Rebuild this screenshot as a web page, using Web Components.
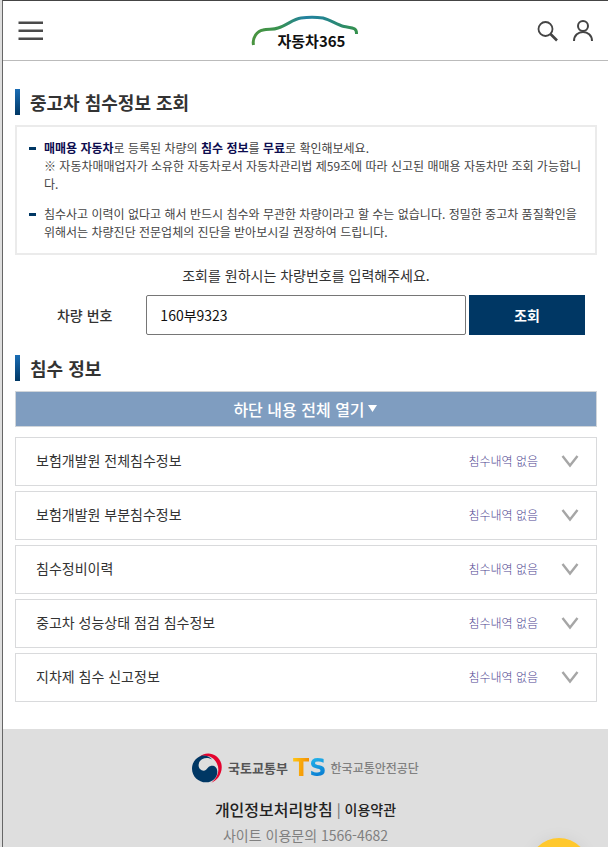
<!DOCTYPE html>
<html lang="ko">
<head>
<meta charset="utf-8">
<meta name="viewport" content="width=device-width, initial-scale=1">
<title>자동차365</title>
<style>
    html {
        background: #dedede;
    }
    body {
        margin: 0;
        font-family: "Noto Sans CJK KR", "Noto Sans", sans-serif;
        font-size: 14px;
        line-height: 20px;
        color: #333;
    }
</style>
</head>
<body>
<car-page>
    <site-header slot="header"></site-header>

    <section-title>중고차 침수정보 조회</section-title>
    <notice-box>
        <notice-item><b>매매용 자동차</b>로 등록된 차량의 <b>침수 정보</b>를 <b>무료</b>로 확인해보세요.<br>※ 자동차매매업자가 소유한 자동차로서 자동차관리법 제59조에 따라 신고된 매매용 자동차만 조회 가능합니다.</notice-item>
        <notice-item>침수사고 이력이 없다고 해서 반드시 침수와 무관한 차량이라고 할 수는 없습니다. 정밀한 중고차 품질확인을 위해서는 차량진단 전문업체의 진단을 받아보시길 권장하여 드립니다.</notice-item>
    </notice-box>
    <search-form value="160부9323">조회를 원하시는 차량번호를 입력해주세요.</search-form>

    <section-title>침수 정보</section-title>
    <flood-list>
        <flood-row status="침수내역 없음">보험개발원 전체침수정보</flood-row>
        <flood-row status="침수내역 없음">보험개발원 부분침수정보</flood-row>
        <flood-row status="침수내역 없음">침수정비이력</flood-row>
        <flood-row status="침수내역 없음">중고차 성능상태 점검 침수정보</flood-row>
        <flood-row status="침수내역 없음">지차제 침수 신고정보</flood-row>
    </flood-list>

    <site-footer slot="footer"></site-footer>
</car-page>
<chat-button></chat-button>

<script>
function define(name, html, setup) {
    const template = document.createElement('template');
    template.innerHTML = html;

    customElements.define(name, class extends HTMLElement {
        constructor() {
            super();
            this.attachShadow({ mode: 'open' });
            this.shadowRoot.appendChild(template.content.cloneNode(true));
        }
        connectedCallback() {
            if (setup) setup(this, this.shadowRoot);
        }
    });
}

define('car-page', `
    <style>
        :host {
            display: flex;
            flex-direction: column;
            min-height: 100vh;
            box-sizing: border-box;
            margin-left: 2px;
            border-left: 1px solid #666;
            border-top: 1px solid #444;
            background: #fff;
        }
        main {
            padding: 28px 11px 27px 12px;
        }
        slot[name="footer"] {
            display: flex;
            flex: 1;
            flex-direction: column;
        }
    </style>
    <slot name="header"></slot>
    <main><slot></slot></main>
    <slot name="footer"></slot>
`);

define('site-header', `
    <style>
        :host {
            display: block;
            border-bottom: 1px solid #bbb;
        }
        header {
            display: grid;
            grid-template-columns: 1fr auto 1fr;
            align-items: center;
            height: 59px;
            padding: 0 14px;
        }
        button {
            display: block;
            padding: 0;
            border: 0;
            background: none;
            cursor: pointer;
        }
        svg {
            display: block;
        }
        .tools {
            display: flex;
            justify-content: flex-end;
            gap: 12px;
        }
        .logo {
            display: grid;
            color: #111;
            text-decoration: none;
        }
        .logo svg, .logo span {
            grid-area: 1 / 1;
        }
        .logo span {
            padding: 20px 0 0 12px;
            text-align: center;
            font-size: 15px;
            line-height: 20px;
            font-weight: 700;
        }
    </style>
    <header>
        <button aria-label="메뉴">
            <svg width="28" height="24" viewBox="0 0 28 24" stroke="#4a4a4a" stroke-width="2.500">
                <path d="M1.500 3.800H26M1.500 11.800H26M1.500 19.800H26"/>
            </svg>
        </button>
        <a class="logo" href="#" aria-label="자동차365">
            <svg width="110" height="36" viewBox="0 0 110 36" fill="none">
                <defs>
                    <linearGradient id="car" x1="0" x2="1" y1="0" y2="0">
                        <stop offset="0" stop-color="#4a9440"/>
                        <stop offset=".25" stop-color="#389250"/>
                        <stop offset=".5" stop-color="#2382a0"/>
                        <stop offset=".68" stop-color="#23848e"/>
                        <stop offset="1" stop-color="#35914e"/>
                    </linearGradient>
                </defs>
                <path d="M2.500 34C1 27 6 20 12 19C17 17.500 22 19 27 17C36 14.500 42 8 50 7C57 6 65 6 72 7C80 9 86 14 93 15.500C100 17 106 16 105.500 23" stroke="url(#car)" stroke-width="3"/>
            </svg>
            <span>자동차365</span>
        </a>
        <div class="tools">
            <button aria-label="검색">
                <svg width="24" height="26" viewBox="0 0 24 26" fill="none" stroke="#444">
                    <circle cx="9.500" cy="11" r="7" stroke-width="1.800"/>
                    <path d="M14.500 16L21 22.500" stroke-width="2.600"/>
                </svg>
            </button>
            <button aria-label="로그인">
                <svg width="22" height="26" viewBox="0 0 22 26" fill="none" stroke="#444" stroke-width="2">
                    <circle cx="11" cy="8" r="5"/>
                    <path d="M2 23C2 11 20 11 20 23"/>
                </svg>
            </button>
        </div>
    </header>
`);

define('section-title', `
    <style>
        :host {
            display: block;
            margin-bottom: 10px;
        }
        h2 {
            display: flex;
            align-items: center;
            gap: 10px;
            margin: 0;
            font-size: 18px;
            line-height: 26px;
            font-weight: 700;
        }
        h2::before {
            content: "";
            width: 5px;
            height: 26px;
            background: linear-gradient(#1a6db5, #003764);
        }
    </style>
    <h2><slot></slot></h2>
`);

define('notice-box', `
    <style>
        :host {
            display: flex;
            flex-direction: column;
            gap: 12px;
            padding: 12px;
            border: 2px solid #ebebeb;
        }
    </style>
    <slot></slot>
`);

define('notice-item', `
    <style>
        :host {
            display: flex;
            gap: 8px;
            font-size: 12px;
            line-height: 18px;
            color: #444;
        }
        :host::before {
            content: "";
            flex: none;
            width: 7px;
            height: 3px;
            margin-top: 8px;
            background: #003764;
        }
        ::slotted(b) {
            color: #0d0d4f;
        }
    </style>
    <div><slot></slot></div>
`);

define('search-form', `
    <style>
        :host {
            display: block;
            padding: 10px 12px 20px 8px;
        }
        p {
            margin: 0 0 10px 4px;
            text-align: center;
        }
        form {
            display: grid;
            grid-template-columns: 22fr 57fr 119px;
            align-items: center;
        }
        label {
            text-align: center;
            font-weight: 500;
        }
        input, button {
            height: 40px;
            box-sizing: border-box;
            font: inherit;
        }
        input {
            width: 100%;
            min-width: 0;
            padding: 0 13px;
            border: 1px solid #767676;
            border-radius: 2px;
            color: #111;
        }
        button {
            margin-left: 3px;
            padding: 0;
            border: 0;
            background: #003764;
            color: #fff;
            font-weight: 700;
            cursor: pointer;
        }
    </style>
    <p><slot></slot></p>
    <form>
        <label for="number">차량 번호</label>
        <input id="number" type="text">
        <button type="button">조회</button>
    </form>
`, (host, root) => {
    root.querySelector('input').value = host.getAttribute('value') || '';
});

define('flood-list', `
    <style>
        :host {
            display: block;
        }
        button {
            display: flex;
            align-items: center;
            justify-content: center;
            gap: 3px;
            width: 100%;
            height: 36px;
            margin-bottom: 10px;
            padding: 0 2px 0 0;
            border: 1px solid #d0d5da;
            background: #7f9dc0;
            color: #fff;
            font: inherit;
            font-size: 16px;
            font-weight: 500;
            cursor: pointer;
        }
        .rows {
            display: flex;
            flex-direction: column;
            gap: 5px;
        }
    </style>
    <button type="button">하단 내용 전체 열기
        <svg width="9" height="8" viewBox="0 0 9 8" fill="#fff"><path d="M0 0H9L4.500 7Z"/></svg>
    </button>
    <div class="rows"><slot></slot></div>
`);

define('flood-row', `
    <style>
        :host {
            display: block;
        }
        button {
            display: flex;
            align-items: center;
            width: 100%;
            height: 49px;
            padding: 0 17px 2px 20px;
            border: 1px solid #d9dadc;
            background: #fff;
            color: #333;
            font: inherit;
            text-align: left;
            cursor: pointer;
        }
        .name {
            flex: 1;
            padding-bottom: 2px;
        }
        .status {
            margin-right: 23px;
            font-size: 12px;
            font-weight: 300;
            color: #4f4691;
        }
    </style>
    <button type="button" aria-expanded="false">
        <span class="name"><slot></slot></span>
        <span class="status"></span>
        <svg width="18" height="14" viewBox="0 0 18 14" fill="none" stroke="#a6a6a6" stroke-width="2.400"><path d="M1.500 2L9 11.500L16.500 2"/></svg>
    </button>
`, (host, root) => {
    root.querySelector('.status').textContent = host.getAttribute('status');
});

define('site-footer', `
    <style>
        :host {
            display: block;
            flex: 1;
            padding: 23px 0 0;
            background: #dedede;
            text-align: center;
        }
        .logos, .org, .links {
            display: flex;
            align-items: center;
            justify-content: center;
        }
        .logos {
            gap: 5px;
            height: 32px;
            margin-bottom: 13px;
        }
        .org {
            gap: 6px;
            font-size: 13px;
            font-weight: 700;
            color: #555;
        }
        .ts {
            gap: 4px;
            font-size: 12px;
            font-weight: 500;
            color: #808080;
        }
        .mark {
            font-family: "DejaVu Sans", sans-serif;
            font-size: 24px;
            font-weight: 700;
        }
        .t, .s {
            background: linear-gradient(100deg, #ffc814, #f08200);
            -webkit-background-clip: text;
            background-clip: text;
            color: transparent;
        }
        .s {
            background-image: linear-gradient(160deg, #28c0f0, #0068c8);
        }
        .links {
            gap: 4px;
            font-weight: 500;
            line-height: 24px;
        }
        a {
            color: #222;
            text-decoration: none;
        }
        .privacy {
            font-size: 16px;
        }
        .links span {
            color: #777;
        }
        p {
            margin: 4px 0 0;
            color: #808080;
        }
    </style>
    <div class="logos">
        <div class="org">
            <svg width="30" height="30" viewBox="0 0 90 90">
                <path fill="#e4032e" d="M20 13C40-7 78-2 88 32C94 60 76 83 58 89C78 74 84 50 75 32C65 10 40 3 20 13Z"/>
                <path fill="#003764" d="M26 9C9 16 0 31 0 47C0 70 19 88 42 88C62 88 76 74 76 56C76 38 58 34 49 43C43 50 38 56 29 52C16 46 17 27 30 19C40 13 52 14 61 20C50 8 38 6 26 9Z"/>
            </svg>
            <span>국토교통부</span>
        </div>
        <div class="org ts">
            <span class="mark"><span class="t">T</span><span class="s">S</span></span>
            <span>한국교통안전공단</span>
        </div>
    </div>
    <div class="links">
        <a class="privacy" href="#">개인정보처리방침</a>
        <span>|</span>
        <a href="#">이용약관</a>
    </div>
    <p>사이트 이용문의 1566-4682</p>
`);

// Round floating button, most of it below the fold
define('chat-button', `
    <style>
        :host {
            position: fixed;
            right: 19px;
            bottom: -51px;
        }
        button {
            display: block;
            width: 60px;
            height: 60px;
            padding: 0;
            border: 0;
            border-radius: 50%;
            background: #ffc82d;
            box-shadow: 0 0 16px rgba(0, 0, 0, .06);
            cursor: pointer;
        }
    </style>
    <button type="button" aria-label="상담"></button>
`);
</script>
</body>
</html>
